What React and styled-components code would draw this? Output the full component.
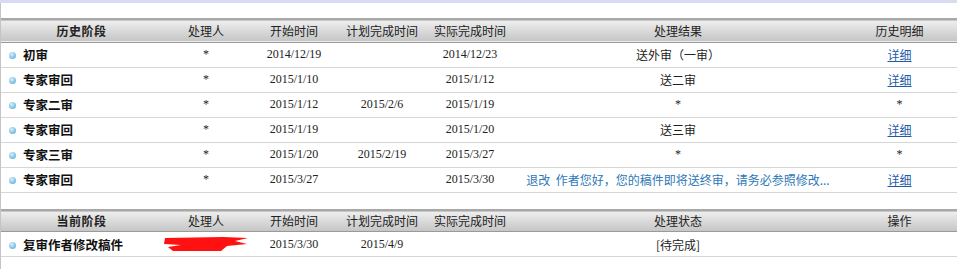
import React from "react";
import styled, { createGlobalStyle } from "styled-components";

const GlobalStyle = createGlobalStyle`
  body {
    margin: 0;
    background: #fff;
    font-family: "Noto Sans CJK SC", "Liberation Sans", sans-serif;
    font-size: 12px;
    color: #222;
  }
`;

const Page = styled.div`
  width: 957px;
  height: 269px;
  overflow: hidden;
`;

const TopStrip = styled.div`
  height: 3px;
  background: #d9dbf3;
`;

const Body = styled.div`
  border-left: 1px solid #c4c4c4;
  padding-top: 15px;
  height: 266px;
  box-sizing: border-box;
`;

const Table = styled.table`
  width: 956px;
  border-collapse: collapse;
  table-layout: fixed;
  margin-bottom: ${(p) => p.$gap || 0}px;
`;

const HeadRow = styled.tr`
  height: ${(p) => p.$h || 23}px;
  background: linear-gradient(#eeeeee, #d9d9d9 50%, #c6c6c6);
  border-top: 2px solid #a8a8a8;
  border-bottom: 1px solid #9a9a9a;
`;

const Th = styled.th`
  font-weight: ${(p) => (p.$bold ? 700 : 400)};
  font-size: 12px;
  color: #222;
  text-align: center;
  padding: 0;
  white-space: nowrap;
  letter-spacing: ${(p) => (p.$bold ? "0.5px" : "0")};
`;

const Row = styled.tr`
  height: 25px;
  border-bottom: 1px solid #d6d6d6;
`;

const Td = styled.td`
  text-align: center;
  padding: 0;
  white-space: nowrap;
  overflow: hidden;
  font-family: ${(p) =>
    p.$serif ? '"Liberation Serif", serif' : '"Noto Sans CJK SC", sans-serif'};
  font-size: 12px;
  color: #222;
`;

const Stage = styled.td`
  padding: 0 0 0 8px;
  font-weight: 700;
  font-size: 12.5px;
  color: #111;
  white-space: nowrap;
`;

const Bullet = styled.span`
  display: inline-block;
  width: 7px;
  height: 7px;
  border-radius: 50%;
  margin-right: 7px;
  vertical-align: 1px;
  background: radial-gradient(circle at 40% 35%, #d8f0fb, #7fc0e0 60%, #5aa6cf);
`;

const Link = styled.a`
  color: #1f5ba7;
  text-decoration: underline;
  font-size: 12px;
`;

const Note = styled.span`
  color: #2d78b8;
  font-size: 12px;
`;

const Mark = () => (
  <svg width="86" height="16" viewBox="0 0 86 16" style={{ display: "block", margin: "0 auto" }}>
    <path
      d="M2 2 L60 1 L85 2 L72 5 L84 8 L64 10 L58 15 L10 15 L5 11 L18 9 L1 8 Z"
      fill="#ff1111"
    />
  </svg>
);

const history = [
  ["初审", "2014/12/19", "", "2014/12/23", "送外审（一审）", true],
  ["专家审回", "2015/1/10", "", "2015/1/12", "送二审", true],
  ["专家二审", "2015/1/12", "2015/2/6", "2015/1/19", "*", false],
  ["专家审回", "2015/1/19", "", "2015/1/20", "送三审", true],
  ["专家三审", "2015/1/20", "2015/2/19", "2015/3/27", "*", false],
  ["专家审回", "2015/3/27", "", "2015/3/30", "note", true],
];

const Cols = () => (
  <colgroup>
    <col style={{ width: 161 }} />
    <col style={{ width: 88 }} />
    <col style={{ width: 88 }} />
    <col style={{ width: 88 }} />
    <col style={{ width: 88 }} />
    <col style={{ width: 328 }} />
    <col style={{ width: 115 }} />
  </colgroup>
);

export default function App() {
  return (
    <Page>
      <GlobalStyle />
      <TopStrip />
      <Body>
        <Table $gap={16}>
          <Cols />
          <thead>
            <HeadRow>
              <Th $bold>历史阶段</Th>
              <Th>处理人</Th>
              <Th>开始时间</Th>
              <Th>计划完成时间</Th>
              <Th>实际完成时间</Th>
              <Th>处理结果</Th>
              <Th>历史明细</Th>
            </HeadRow>
          </thead>
          <tbody>
            {history.map(([stage, start, plan, done, result, link], i) => (
              <Row key={i}>
                <Stage>
                  <Bullet />
                  {stage}
                </Stage>
                <Td $serif>*</Td>
                <Td $serif>{start}</Td>
                <Td $serif>{plan}</Td>
                <Td $serif>{done}</Td>
                {result === "note" ? (
                  <Td>
                    <Note>退改&nbsp;&nbsp;作者您好，您的稿件即将送终审，请务必参照修改...</Note>
                  </Td>
                ) : (
                  <Td $serif={result === "*"}>{result}</Td>
                )}
                <Td $serif={!link}>{link ? <Link href="#">详细</Link> : "*"}</Td>
              </Row>
            ))}
          </tbody>
        </Table>
        <Table>
          <Cols />
          <thead>
            <HeadRow $h={22}>
              <Th $bold>当前阶段</Th>
              <Th>处理人</Th>
              <Th>开始时间</Th>
              <Th>计划完成时间</Th>
              <Th>实际完成时间</Th>
              <Th>处理状态</Th>
              <Th>操作</Th>
            </HeadRow>
          </thead>
          <tbody>
            <Row>
              <Stage>
                <Bullet />
                复审作者修改稿件
              </Stage>
              <Td>
                <Mark />
              </Td>
              <Td $serif>2015/3/30</Td>
              <Td $serif>2015/4/9</Td>
              <Td $serif></Td>
              <Td>[待完成]</Td>
              <Td></Td>
            </Row>
          </tbody>
        </Table>
      </Body>
    </Page>
  );
}
